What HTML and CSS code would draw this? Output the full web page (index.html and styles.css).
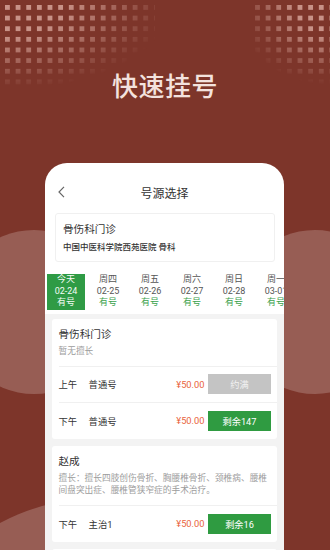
FILE: index.html
```html
<!DOCTYPE html>
<html lang="zh-CN">
<head>
<meta charset="utf-8">
<title>快速挂号</title>
<link rel="stylesheet" href="styles.css">
</head>
<body>
<div class="decor">
  <div class="dots dots-left"></div>
  <div class="dots dots-right"></div>
  <div class="circle circle-left"></div>
  <div class="circle circle-right"></div>
  <div class="circle circle-bottom"></div>
</div>

<h1 class="headline">快速挂号</h1>

<div class="phone">
  <div class="nav">
    <span class="nav-back">
      <svg width="7" height="12" viewBox="0 0 7 12"><polyline points="6,0.8 1,6 6,11.2" fill="none" stroke="#666" stroke-width="1.2"/></svg>
    </span>
    <span class="nav-title">号源选择</span>
    <span></span>
  </div>

  <div class="dept-card">
    <div class="dept-name">骨伤科门诊</div>
    <div class="dept-hosp">中国中医科学院西苑医院 骨科</div>
  </div>

  <div class="dates">
    <div class="date active"><span>今天</span><span class="num">02-24</span><span class="avail">有号</span></div>
    <div class="date"><span>周四</span><span class="num">02-25</span><span class="avail">有号</span></div>
    <div class="date"><span>周五</span><span class="num">02-26</span><span class="avail">有号</span></div>
    <div class="date"><span>周六</span><span class="num">02-27</span><span class="avail">有号</span></div>
    <div class="date"><span>周日</span><span class="num">02-28</span><span class="avail">有号</span></div>
    <div class="date"><span>周一</span><span class="num">03-01</span><span class="avail">有号</span></div>
  </div>

  <div class="list">
    <div class="card">
      <div class="card-head">
        <div class="card-title">骨伤科门诊</div>
        <div class="card-desc">暂无擅长</div>
      </div>
      <div class="row">
        <span class="period">上午</span><span class="type">普通号</span>
        <span class="price">¥50.00</span><span class="btn full">约满</span>
      </div>
      <div class="row">
        <span class="period">下午</span><span class="type">普通号</span>
        <span class="price">¥50.00</span><span class="btn">剩余147</span>
      </div>
    </div>

    <div class="card">
      <div class="card-head">
        <div class="card-title">赵成</div>
        <div class="card-desc">擅长：擅长四肢创伤骨折、胸腰椎骨折、颈椎病、腰椎间盘突出症、腰椎管狭窄症的手术治疗。</div>
      </div>
      <div class="row">
        <span class="period">下午</span><span class="type">主治1</span>
        <span class="price">¥50.00</span><span class="btn">剩余16</span>
      </div>
    </div>

    <div class="card card-empty"></div>
  </div>
</div>
</body>
</html>
```

FILE: styles.css
```css
html, body {
  margin: 0;
  padding: 0;
  height: 550px;
  overflow: hidden;
}
body {
  background: #7d352a;
  font-family: Roboto, "Noto Sans CJK SC", sans-serif;
  position: relative;
}

/* decoration */
.decor {
  position: absolute;
  inset: 0;
  overflow: hidden;
}
.dots {
  position: absolute;
  top: 5px;
  height: 85px;
  background-image: conic-gradient(from 90deg at 4.5px 4.5px, transparent 0 50%, rgba(255, 214, 204, 0.58) 0 75%, transparent 0);
  background-size: 10.65px 10.65px;
}
.dots-left {
  left: 5px;
  width: 150px;
  -webkit-mask-image: radial-gradient(ellipse 165px 85px at 0 0, #000 35%, transparent 100%);
  mask-image: radial-gradient(ellipse 165px 85px at 0 0, #000 35%, transparent 100%);
}
.dots-right {
  left: 255px;
  width: 75px;
  -webkit-mask-image: radial-gradient(ellipse 95px 80px at 100% 0, #000 35%, transparent 100%);
  mask-image: radial-gradient(ellipse 95px 80px at 100% 0, #000 35%, transparent 100%);
}
.circle {
  position: absolute;
  border-radius: 50%;
  background: rgba(255, 255, 255, 0.2);
}
.circle-left {
  left: -48px;
  top: 230px;
  width: 164px;
  height: 164px;
}
.circle-right {
  left: 233px;
  top: 230px;
  width: 164px;
  height: 164px;
}
.circle-bottom {
  left: -105px;
  top: 499px;
  width: 400px;
  height: 400px;
}

/* headline */
.headline {
  margin: 0;
  padding-top: 72px;
  text-align: center;
  font-size: 26px;
  line-height: 30px;
  font-weight: 500;
  color: #f3e2de;
  letter-spacing: 0.5px;
  position: relative;
}

/* phone */
.phone {
  position: relative;
  z-index: 1;
  margin: 61px 0 0 45px;
  width: 239px;
  height: 387px;
  overflow: hidden;
  background: #fff;
  border-radius: 22px 22px 0 0;
}
.nav {
  display: grid;
  grid-template-columns: 1fr auto 1fr;
  align-items: center;
  height: 22px;
  padding-top: 18px;
  margin-bottom: 10px;
}
.nav-back {
  display: flex;
  padding-left: 13px;
}
.nav-title {
  font-size: 12px;
  color: #333;
}

.dept-card {
  margin: 0 9px 0 10px;
  border: 1px solid #f0f0f0;
  border-radius: 3px;
  padding: 9px 7px 8px;
}
.dept-name {
  font-size: 10.6px;
  line-height: 14px;
  color: #333;
}
.dept-hosp {
  margin-top: 4px;
  font-size: 8.5px;
  line-height: 12px;
  color: #333;
  font-weight: 500;
}

.dates {
  display: flex;
  margin-top: 9px;
  margin-bottom: 4px;
}
.date {
  flex: 0 0 42px;
  box-sizing: border-box;
  height: 39px;
  padding-top: 3px;
  display: flex;
  flex-direction: column;
  align-items: center;
  font-size: 9px;
  line-height: 11.5px;
  color: #555;
}
.date .avail {
  color: #3ba24c;
}
.date.active {
  background: #2f9b45;
  background-clip: content-box;
  margin: 0 2px;
  flex-basis: 38px;
  color: #f4fbf5;
}
.date.active .avail {
  color: #f4fbf5;
}

.list {
  background: #f3f3f3;
  padding: 5px 7px 0;
  display: flex;
  flex-direction: column;
  gap: 7px;
}
.card {
  background: #fff;
  border-radius: 3px;
}
.card-empty {
  height: 60px;
}
.card-head {
  padding: 9px 6px 8px 6.5px;
}
.card-title {
  font-size: 10.6px;
  line-height: 14px;
  color: #333;
}
.card-desc {
  margin-top: 3px;
  font-size: 8.7px;
  line-height: 12.7px;
  color: #9c9c9c;
}
.row {
  display: flex;
  align-items: center;
  height: 35.5px;
  margin-left: 6.5px;
  padding-right: 6px;
  border-top: 1px solid #f0f0f0;
  font-size: 9.3px;
  color: #333;
}
.type {
  margin-left: 11.5px;
}
.price {
  margin-left: auto;
  color: #e9633d;
}
.btn {
  margin-left: 3.5px;
  width: 63px;
  height: 20px;
  display: flex;
  align-items: center;
  justify-content: center;
  background: #2f9b41;
  color: #fff;
  font-size: 9.2px;
}
.btn.full {
  background: #c4c4c4;
  color: #f2f2f2;
}
```
